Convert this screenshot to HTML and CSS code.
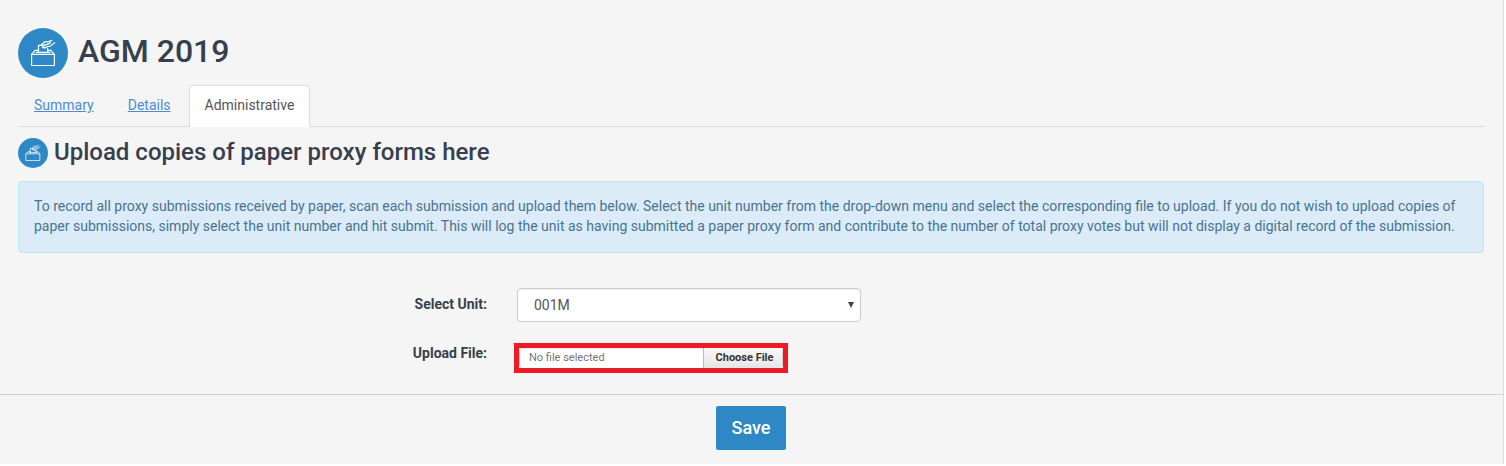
FILE: index.html
```html
<!DOCTYPE html>
<html lang="en">

<head>
    <meta charset="UTF-8">
    <meta name="viewport" content="width=device-width, initial-scale=1.0">
    <title>AGM 2019</title>
    <link rel="stylesheet" href="styles.css">
</head>

<body>
    <svg class="sprite">
        <symbol id="ballot" viewBox="0 0 50 50">
            <g fill="none" stroke="#fff" stroke-width="1.2" stroke-linejoin="round" stroke-linecap="round">
                <path d="M13.6 26.4h22.8v11.1H13.6z" />
                <path d="M13.6 26.4l3.6-4.1h3M36.4 26.4l-3.6-4.1h-3" />
                <path d="M18.2 24.4h13.8" />
                <path d="M20.5 24v-6.6h4.8M29.6 24v-4" />
                <path d="M23.2 17l3-2.8 4.4-.6 3.2-1.2M25.2 17.4l4-1 3.4-1.6M25.2 20l4.2-1.4 3-.6 4.4-3.4M25.8 17.6l-1.4 2 2.8.4" />
            </g>
        </symbol>
    </svg>

    <div class="page">
        <div class="content">
            <header class="title">
                <svg class="icon"><use href="#ballot" /></svg>
                <h1>AGM 2019</h1>
            </header>

            <nav class="tabs">
                <a class="tab" href="#">Summary</a>
                <a class="tab" href="#">Details</a>
                <a class="tab active">Administrative</a>
            </nav>

            <div class="subtitle">
                <svg class="icon icon-small"><use href="#ballot" /></svg>
                <h2>Upload copies of paper proxy forms here</h2>
            </div>

            <div class="alert">
                To record all proxy submissions received by paper, scan each submission and upload them below. Select the unit number from the drop-down menu and select the corresponding file to upload. If you do not wish to upload copies of
                <br>paper submissions, simply select the unit number and hit submit. This will log the unit as having submitted a paper proxy form and contribute to the number of total proxy votes but will not display a digital record of the submission.
            </div>

            <form class="form" id="proxyForm">
                <div class="row">
                    <label for="unit">Select Unit:</label>
                    <div class="select-wrap">
                        <select id="unit">
                            <option>001M</option>
                        </select>
                        <svg class="arrow" viewBox="0 0 6 6"><path d="M0 0h6L3 6z" fill="#444" /></svg>
                    </div>
                </div>
                <div class="row row-file">
                    <label>Upload File:</label>
                    <div class="highlight">
                        <div class="file">
                            <span class="file-name">No file selected</span>
                            <span class="file-button">Choose File</span>
                        </div>
                    </div>
                </div>
            </form>
        </div>

        <div class="actions">
            <button class="save" type="submit" form="proxyForm">Save</button>
        </div>
    </div>
</body>

</html>
```

FILE: styles.css
```css
* {
    box-sizing: border-box;
}

body {
    margin: 0;
    background-color: #fff;
    font-family: Roboto, "Liberation Sans", sans-serif;
    font-size: 14px;
    line-height: 20px;
    color: #373f4d;
}

.sprite {
    display: none;
}

.page {
    width: 1504px;
    height: 464px;
    background-color: #f5f5f5;
    border-right: 1px solid #dcdcdc;
}

.content {
    height: 394px;
    padding: 28px 19px 0 18px;
}

.title {
    display: flex;
    gap: 10px;
    height: 57px;
}

.icon {
    flex: none;
    width: 50px;
    height: 50px;
    border-radius: 50%;
    background-color: #2e88c5;
}

.icon-small {
    width: 30px;
    height: 30px;
}

h1,
h2 {
    margin: 0;
    font-weight: 500;
    white-space: nowrap;
}

h1 {
    font-size: 32px;
    line-height: 46px;
}

h2 {
    font-size: 24px;
    line-height: 28px;
}

.tabs {
    display: flex;
    gap: 2px;
    height: 42px;
    border-bottom: 1px solid #ddd;
}

.tab {
    height: 42px;
    padding: 10px 15px;
    border: 1px solid transparent;
    border-radius: 4px 4px 0 0;
    line-height: 19px;
    color: #4f8bd3;
    text-decoration: underline;
}

.tab.active {
    border-color: #ddd;
    border-bottom-color: #fff;
    background-color: #fff;
    color: #555;
    text-decoration: none;
}

.subtitle {
    display: flex;
    gap: 6px;
    margin-top: 11px;
}

.alert {
    height: 72px;
    margin-top: 13px;
    padding: 14px 15px;
    border: 1px solid #bce8f1;
    border-radius: 4px;
    background-color: #dbecf8;
    color: #4a7390;
    white-space: nowrap;
}

.form {
    margin-top: 35px;
}

.row {
    display: flex;
}

.row label {
    width: 469px;
    margin-right: 30px;
    padding-top: 6px;
    font-weight: 700;
    text-align: right;
}

.select-wrap {
    position: relative;
    width: 344px;
    height: 34px;
}

select {
    width: 100%;
    height: 100%;
    padding: 0 16px;
    border: 1px solid #ccc;
    border-radius: 4px;
    background-color: #fff;
    box-shadow: inset 0 1px 1px rgba(0, 0, 0, 0.075);
    font: inherit;
    color: #555;
    appearance: none;
}

.arrow {
    position: absolute;
    top: 14px;
    right: 7px;
    width: 6px;
    height: 6px;
}

.row-file {
    margin-top: 21px;
}

.row-file label {
    margin-right: 27px;
    padding-top: 0;
}

.highlight {
    width: 274px;
    height: 30px;
    border: 5px solid #ed1c24;
}

.file {
    display: flex;
    height: 20px;
    border-left: 1px solid #ccc;
    border-right: 1px solid #ccc;
    border-radius: 4px;
    background-color: #fff;
    box-shadow: inset 0 1px 1px rgba(0, 0, 0, 0.075);
    font-size: 11px;
    line-height: 20px;
}

.file-name {
    flex: 1;
    padding-left: 9px;
    color: #777;
}

.file-button {
    width: 79px;
    padding-left: 3px;
    border-left: 1px solid #bbb;
    border-radius: 0 4px 4px 0;
    background-image: linear-gradient(#f8f8f8, #e6e6e6);
    font-weight: 700;
    text-align: center;
    color: #333;
}

.actions {
    display: flex;
    justify-content: center;
    height: 70px;
    padding: 11px 1px 0 0;
    border-top: 1px solid #d0d0d0;
}

.save {
    width: 70px;
    height: 44px;
    padding: 0 0 2px;
    border: none;
    border-radius: 2px;
    background-color: #2e88c5;
    font-family: inherit;
    font-size: 18px;
    font-weight: 500;
    color: #fff;
}
```
